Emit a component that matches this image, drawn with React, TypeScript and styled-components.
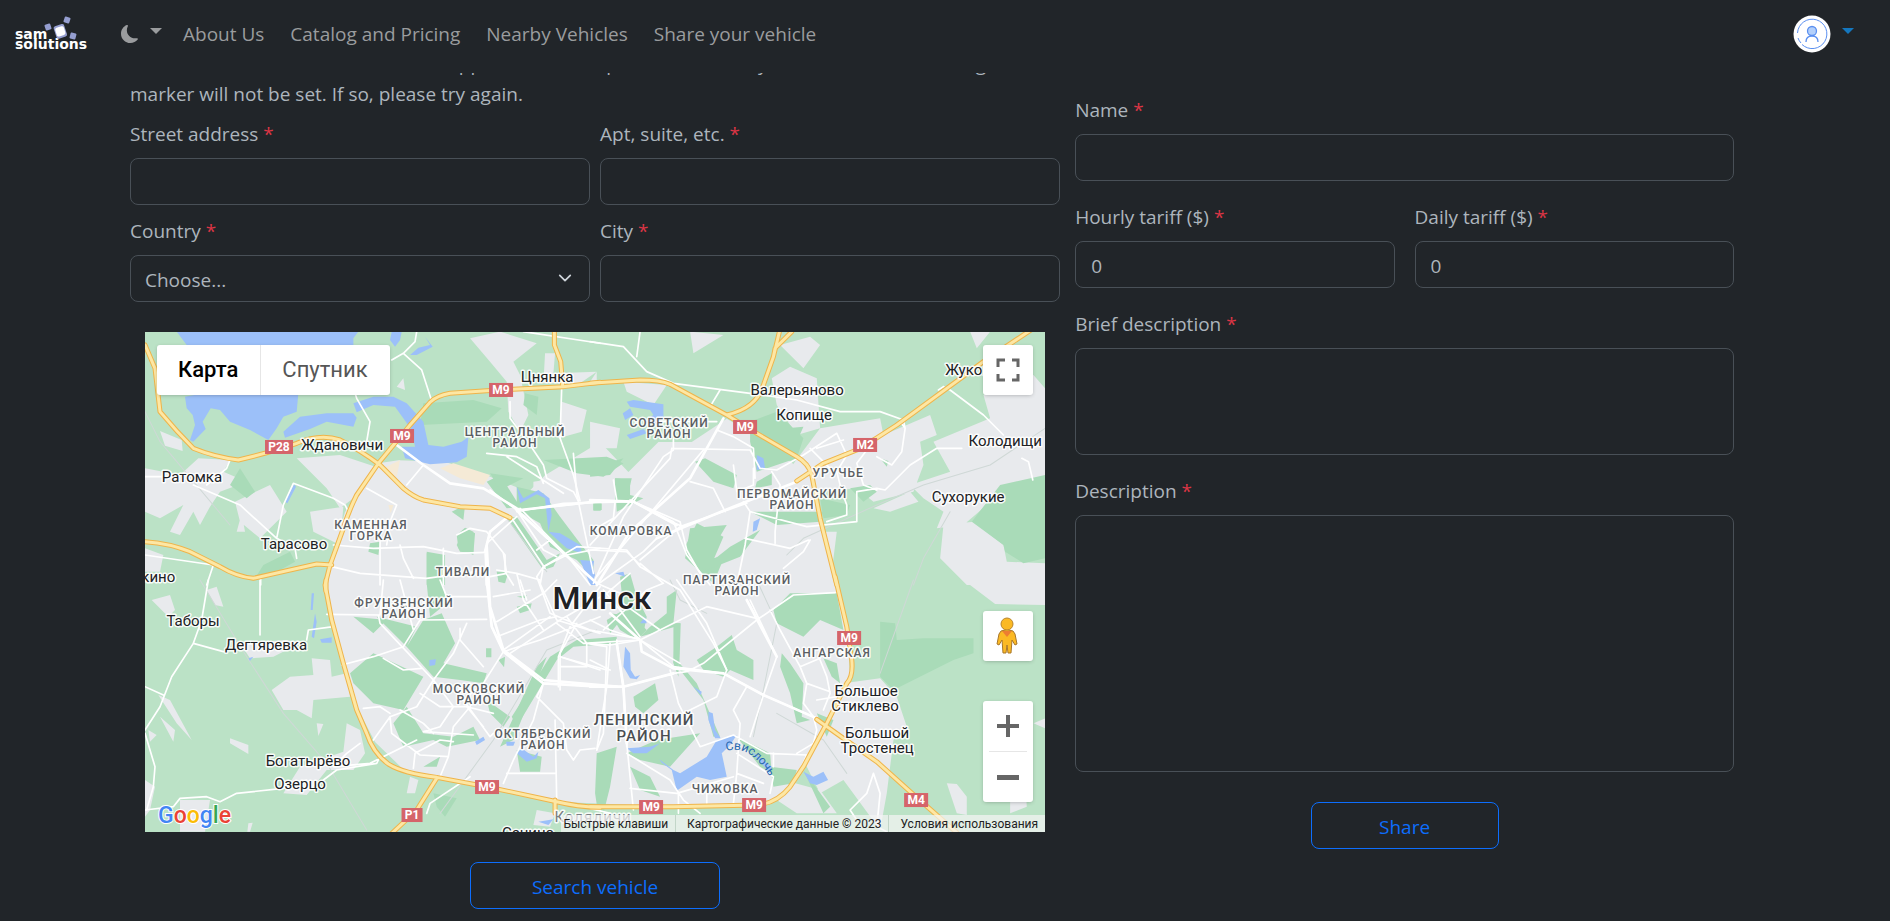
import React, { useId, useState } from "react";
import styled, { createGlobalStyle } from "styled-components";

const GlobalStyle = createGlobalStyle`
  *, *::before, *::after { box-sizing: border-box; }
  body {
    margin: 0;
    background: #212529;
    color: #adb5bd;
    font-family: "Open Sans", "Noto Sans", sans-serif;
    font-size: 19px;
    line-height: 30px;
  }
  button, input, select, textarea { font: inherit; color: inherit; }
`;

/* ---------- navigation ---------- */

const Navbar = styled.nav`
  display: flex;
  align-items: center;
  height: 73px;
  padding: 0 36px 6px 15px;
  background: #212529;
`;

const LogoLink = styled.a`
  display: block;
  width: 77px;
  height: 36px;
  margin-right: 29px;
`;

const MenuToggle = styled.button<{ $tone?: string }>`
  display: flex;
  align-items: center;
  gap: 11px;
  padding: 0;
  border: 0;
  background: none;
  color: ${(p) => p.$tone ?? "#9a9c9e"};
  cursor: pointer;
`;

const Caret = styled.span`
  margin-bottom: 6px;
  border: 6px solid transparent;
  border-top-color: currentColor;
  border-bottom: 0;
`;

const NavLinks = styled.div`
  display: flex;
  flex: 1;
  gap: 26px;
  margin-left: 21px;
`;

const NavLink = styled.a`
  color: #9a9c9e;
  text-decoration: none;
  white-space: nowrap;
`;

/* ---------- forms ---------- */

const Main = styled.main`
  display: grid;
  grid-template-columns: 24fr 17fr;
  gap: 15px;
  align-items: start;
  padding: 0 156px 12px 130px;
  overflow: hidden;
`;

const AddressForm = styled.form`
  display: flex;
  flex-direction: column;
  gap: 10px;
`;

const VehicleForm = styled.form`
  display: flex;
  flex-direction: column;
  gap: 20px;
  padding-top: 21px;
`;

const Hint = styled.p`
  margin: -24px 0 -1px;
`;

const FieldRow = styled.div<{ $gap: number }>`
  display: grid;
  grid-template-columns: 1fr 1fr;
  gap: ${(p) => p.$gap}px;
`;

const FieldBox = styled.div`
  display: flex;
  flex-direction: column;
  gap: 8px;
  min-width: 0;
  line-height: 32px;
`;

const Required = styled.span`
  color: #dc3545;
`;

const control = `
  display: block;
  width: 100%;
  padding: 8px 15px 6px;
  border: 1px solid #495057;
  border-radius: 8px;
  background: #212529;
  appearance: none;
  outline: none;
  line-height: 30px;
`;

const Input = styled.input`
  ${control}
  height: 47px;
  &::-webkit-inner-spin-button { appearance: none; }
`;

const Select = styled.select`
  ${control}
  height: 47px;
  padding-left: 14px;
`;

const TextArea = styled.textarea<{ $height: number }>`
  ${control}
  height: ${(p) => p.$height}px;
  resize: none;
`;

const SelectWrap = styled.div`
  position: relative;
`;

const SelectArrow = styled.svg`
  position: absolute;
  top: 16px;
  right: 18px;
  pointer-events: none;
`;

const OutlineButton = styled.button<{ $width: number; $space: number }>`
  align-self: center;
  width: ${(p) => p.$width}px;
  height: 47px;
  margin-top: ${(p) => p.$space}px;
  padding: 2px 0 0;
  border: 1px solid #0d6efd;
  border-radius: 8px;
  background: transparent;
  color: #0d6efd;
  cursor: pointer;
`;

/* ---------- map ---------- */

const MapFrame = styled.section`
  position: relative;
  height: 500px;
  margin: 20px 15px 0;
  overflow: hidden;
  background: #bbe2c6;
  font-family: Roboto, "Noto Sans", sans-serif;
`;

const MapCanvas = styled.svg`
  display: block;
  width: 100%;
  height: 100%;
  font-family: Roboto, "Noto Sans", sans-serif;
`;

const MapTypeBar = styled.div`
  position: absolute;
  top: 13px;
  left: 12px;
  display: flex;
  height: 50px;
  border-radius: 3px;
  background: #fff;
  box-shadow: 0 1px 4px -1px rgba(0, 0, 0, 0.3);
`;

const MapTypeButton = styled.button<{ $active?: boolean }>`
  padding: 0 22px 0 21px;
  border: 0;
  border-right: ${(p) => (p.$active ? "1px solid #e6e6e6" : "0")};
  background: none;
  color: ${(p) => (p.$active ? "#000" : "#565656")};
  font-size: 22px;
  font-weight: ${(p) => (p.$active ? 500 : 400)};
  cursor: pointer;
`;

const MapTools = styled.div`
  position: absolute;
  top: 13px;
  right: 12px;
  bottom: 30px;
  display: flex;
  flex-direction: column;
  width: 50px;
`;

const ToolCard = styled.div<{ $push?: boolean; $gap?: number }>`
  margin-top: ${(p) => (p.$push ? "auto" : `${p.$gap ?? 0}px`)};
  border-radius: 3px;
  background: #fff;
  box-shadow: 0 1px 4px -1px rgba(0, 0, 0, 0.3);
`;

const ToolButton = styled.button`
  display: block;
  width: 50px;
  height: 50px;
  padding: 0;
  border: 0;
  background: none;
  cursor: pointer;
`;

const ToolDivider = styled.hr`
  height: 1px;
  margin: 0 6px;
  border: 0;
  background: #e6e6e6;
`;

const Attribution = styled.div`
  position: absolute;
  right: 0;
  bottom: 0;
  display: flex;
  height: 17px;
  font-size: 12px;
  line-height: 18px;
  color: #222;
`;

const AttributionItem = styled.a`
  padding: 0 7px 0 11px;
  border-left: 1px solid rgba(160, 190, 170, 0.5);
  background: rgba(245, 245, 245, 0.7);
  color: inherit;
  text-decoration: none;
  white-space: nowrap;

  &:first-child {
    padding-left: 2px;
    border-left: 0;
  }
`;

/* Geometry is stored in map sheets; each sheet has its own origin. */
type Sheet = "nw" | "ne" | "sw" | "se" | "mid";
const sheetOrigin: Record<Sheet, string> = {
  nw: "-15 -21",
  ne: "1335 -21",
  sw: "-15 744",
  se: "1335 744",
  mid: "555 354",
};
type Layer = Partial<Record<Sheet, string>>;

const URBAN =
  "M1365 330L1200 430L1150 480L1000 420L900 390L760 385L700 394L600 540L555 699L543 774L560 864L595 994L640 1134L690 1230L785 1322L1025 1364L1235 1409L1585 1424L1865 1412L1925 1374L2045 1174L2115 1034L2105 884L2040 620L1995 440L1880 340L1745 260L1640 330L1540 330L1450 420Z";

const suburbs: Layer = {
  nw: `M60 318L125 345L128 378L75 362Z M175 400L270 405L250 440L320 470L240 500L210 545L180 600L160 560L120 630L90 620L130 540L60 580L15 560V430L120 450Z
    M285 530L390 480L440 560L360 640L300 590Z M470 400L600 390L720 430L640 520L600 550L560 490Z M510 560L610 545L600 660L520 620Z M770 185L790 160L795 195Z
    M990 40L1080 20L1190 55L1120 110L1140 150L1165 270L1140 320L1105 260L1100 170L1050 110Z M1215 85H1245L1240 145L1370 140L1320 175H1210Z M1265 230L1340 255L1325 320L1255 340Z M15 670L70 690L60 740H15Z
    M1180 470L1380 440V780H1180Z M290 620L305 565L315 620Z M660 430L720 440L700 520L650 540Z`,
  ne: `M300 20L400 30L310 85Z M570 60L660 35L690 60L640 130Z M545 160L600 125L680 160L690 310L620 330L560 240Z M690 310L870 280L880 330L1020 270L1040 330L990 350L1000 420L970 500L850 530L800 490L690 500L600 430Z
    M1030 350L1200 280L1180 210L1330 150L1365 190V490L1290 470L1230 490L1190 540L1120 600L1040 610L1060 560L1000 520L960 480L1080 440Z M1060 600L1150 590L1240 660L1250 710L1365 715V780H1130L1050 700Z
    M850 550L960 500L985 530L900 560Z M1140 20H1200L1160 70Z M100 170L230 180L190 240L110 200Z M0 290L90 310L80 370L0 370Z M20 140V170H0Z M590 620L740 620L720 780H590Z`,
  sw: `M35 60L90 45L105 90L85 110Z M200 30L230 20L250 80L225 75Z M395 330L450 290L520 285L515 235L570 240L575 290L620 280L630 350L520 360L515 415L470 390L430 390Z M55 345L90 360L155 480L110 430Z M60 410L105 450L100 485Z
    M270 475L325 495V522L270 490Z M530 430L550 432L535 468Z M620 430L660 450L675 520L640 570L560 570L500 645L430 640L480 560L610 515Z M300 190L440 180L480 190L400 230L330 235Z M15 600L45 620L30 690L15 710Z M120 660H210L195 755H120Z M810 590L835 600L825 640L800 640Z M1190 690L1245 700L1230 740L1180 735Z M325 730L338 728L330 755H322Z M25 450L50 465L30 485Z`,
  se: `M1120 0H1365V75L1215 72Z M760 310L870 295L920 350L950 440L910 480L890 640L870 750L760 600L690 640L640 540L710 430Z M580 600L690 630L740 700H620L560 660Z M1070 610L1100 612L1130 650V705L1100 700Z M1260 655L1305 600L1310 680L1260 700Z M1330 430L1365 415V445Z`,
};

const parks: Layer = {
  nw: `M345 760L370 720L450 680L465 710L420 735Z M850 235L1000 225L1085 250L1040 290L840 300Z M935 560L975 540L970 585Z M950 630L975 608L1000 620L1000 690L955 670Z M860 680L915 690V780H860Z M270 480L300 430L345 500L320 520Z M690 655L720 650L715 690L685 680Z M1040 470L1080 450L1140 545L1100 550Z M1155 205L1195 215L1190 270L1150 240Z M1070 740L1105 740L1095 775L1075 770Z`,
  ne: `M480 290L560 260L600 300L640 340L620 400L560 420L500 440L480 350Z M315 410L345 400L440 450L430 490L370 470Z M75 460L120 465L120 510L160 520L80 560Z M10 535H35V555H10Z M300 610L410 600L380 650L370 700L405 690L370 775L285 700Z M500 560L700 560L690 590L560 600L480 560Z M690 520L780 540L770 570L700 580Z M780 490L840 480L860 500L820 530Z M1145 590L1230 480L1365 450V700L1300 715L1245 680L1240 660Z M0 430L100 400L60 450L0 455Z M590 310L640 305L620 350Z M870 400L895 408L890 425Z M500 470L545 445V480L495 490Z`,
  sw: `M640 110L740 120L700 160Z M710 110L830 140L800 200L740 140Z M630 280L700 220L850 290L790 390L700 370L640 310Z M850 120L905 100L945 190L910 250L1040 280L1030 310L960 300L880 290L800 200Z M1038 205H1054V232H1038Z M1075 240L1095 230L1092 262Z M800 380L760 430L790 500L880 480L920 500L1020 480L1000 440L940 470L850 460Z M1040 360L1110 410L1090 440L1050 400Z M1130 510L1205 530L1200 575H1140Z M880 640L950 655L915 710L890 680Z M850 560L900 530L890 560Z M1130 80L1175 70L1170 90L1140 100Z M1130 50L1160 45L1155 55Z M1190 260L1220 230L1120 480L1080 500Z`,
  se: `M870 125L915 130L920 180L1000 175L1150 175V220L1090 240L910 330L870 290Z M550 90L600 40H740L760 150L690 120L640 170L560 130Z M320 240L380 200L425 165L440 210L490 240V300L420 270L400 290L340 270Z M250 130H272L268 250H250Z M130 350L195 310L205 360L160 400L135 380Z M575 220L600 250L640 310L635 410L660 420L620 430L600 340L570 260Z M700 235L740 250L750 310L725 290Z M20 520L80 500L60 620L30 740L15 640Z M110 520L200 480L330 460L240 560L150 540Z M540 560L620 570L610 610L550 620Z M260 240L320 310L390 470L370 470L340 360L270 270Z M120 560L180 590L210 650L150 630Z M640 570L720 680L700 700Z M60 100L130 110L170 150L140 180L90 150Z M440 470L540 520L545 580L510 560Z M680 400L730 420L710 470Z`,
  mid: `M380 285L405 235L435 250L430 310L390 305Z M290 310L340 315L335 390L350 460L300 500L290 400Z M500 365L535 370L520 400Z M560 110L640 130L690 200L750 280L790 330L790 380L740 330L660 290L630 220L560 180Z M530 205L560 200L650 330L690 310L670 350L640 360Z M1010 440L1040 420L1030 520L1050 520L1045 680L1030 640L1035 530L930 560L960 530L1010 490Z M870 380L900 370L920 440L950 500L940 550L880 500L840 550L830 510L880 480Z M1095 350L1065 290L1100 220L1180 260L1150 330L1200 290L1290 240L1230 320L1130 360Z M545 800L660 620L740 570L860 560V580L730 590L680 630L560 830Z M855 85L905 85L890 150L855 160Z M790 158H812V182H790Z M640 30L830 20L880 40L820 80L740 70Z M480 70L580 85L510 120Z`,
};

const water: Layer = {
  nw: `M110 20H640V60H140Z M640 20H655L640 40Z M755 20H785L780 45L765 65L750 45Z M135 215L190 205H475L470 260L430 275L410 310L385 345L330 315L270 290L240 255L212 250L188 290L197 312L160 350L150 345L165 300L158 270L140 250Z M430 320L480 275L560 265L640 265L650 278L640 305L560 290L510 312L435 338Z
    M640 235L700 215L760 215L800 235L850 290L865 360L910 365L965 350L985 335L980 395L950 412L870 418L795 400L785 365L825 365L815 315L765 245L700 240L650 262Z M435 530L462 478L468 485L442 535Z M1130 485L1150 520L1195 495L1228 520L1235 570L1225 620L1260 625L1320 660L1325 685L1280 670L1225 620L1215 520L1190 508L1140 535Z M1320 705L1362 708L1355 750L1375 780H1350Z M810 90L835 68L870 60L855 35L878 65L830 90Z`,
  ne: `M110 230L130 225L220 238V275L205 300L160 290L190 270L180 255L120 245Z M98 265L120 250L130 270L105 285Z M110 330L160 312L170 325L120 342Z M500 390L520 400L525 430L500 435Z M490 590L510 580L500 615L488 620Z M75 745L100 740L105 755Z M0 700L15 750L10 765L0 750Z`,
  sw: `M540 178L575 172V188H545Z M515 40H522L518 90H512Z M525 100L530 125L522 175L515 170Z M868 240L888 238L885 255L868 258Z M325 235L340 230L328 245Z M1130 520L1145 505L1180 530L1195 515L1190 535L1160 545Z M1005 485L1030 470L1035 480L1010 495Z M1195 725L1240 718L1225 735Z M1098 485H1125L1120 497H1100Z`,
  se: `M105 200L120 220L122 270L135 290L150 285L140 298L120 295L100 260Z M355 395L368 400L375 450L392 475L375 475L355 420Z M208 538L250 570L270 580L350 530L380 480L440 465L420 495L395 520L410 590L360 600L320 590L260 632L245 570L215 548Z M640 575L670 590L700 575L714 600L680 615L660 610Z M110 505L180 500L210 490L170 520L130 520Z M310 320L335 335L332 345Z M440 480L545 560L540 580L480 510Z M150 130L165 110L170 130Z`,
};

const sand: Layer = {
  nw: `M730 430L780 405L770 455Z M900 430L940 415L1050 450L1030 480L960 460Z M745 540L760 540L752 565Z`,
};

const minorRoads: Layer = {
  nw: `M830 20L825 50L790 85L755 105 M790 85L845 135L875 228 M640 190L650 220L690 290L680 350L640 370 M1380 55L1150 20 M160 480L300 540L410 640L420 590L430 540L460 475L580 520L615 540L625 560 M410 640L465 670L470 700 M15 455H80 M15 690L220 720L200 780 M270 405L260 430L200 480 M680 490L770 540L750 590L740 660 M580 660L700 670L850 665L950 685L1040 682
    M1110 230L1110 280L1170 360L1210 420L1220 460L1300 500L1315 528 M1265 185L1260 340L1300 450L1320 528 M1140 555L1380 530 M1100 578L1050 620L1035 680L1040 780 M1140 550L1280 690L1380 670 M1280 690L1210 725L1200 780 M950 630L990 610L1040 620L1095 690V740L1120 780 M780 660L790 700L820 760 M720 600V780 M575 725L660 745L860 760L1040 735 M850 420L800 480 M910 670V780 M362 760V780 M1115 580L1215 730 M1280 690L1350 780`,
  ne: `M0 50L100 65L170 140L250 175L480 205 M150 20L140 95 M390 195L360 245 M480 205L620 225L750 260H870L940 285L945 310L935 380L905 420L860 395 M800 415L830 375 M945 310L930 290 M245 370L480 375L510 430 M380 315L430 335L490 370L495 460 M245 370L240 400L0 660 M300 470L370 490L405 560 M0 525L130 530L250 590L290 690L360 780 M430 420L440 500L490 480V430 M510 430L560 435L640 390L740 325L770 390L740 440L755 500L770 540V570L710 590
    M660 370L720 430 M680 370L760 345 M480 560L650 605L800 590V500L860 490L885 495L960 420L1040 370H1115 M460 530L480 560L465 660L440 780 M465 640L600 670L655 645 M580 730L640 680L660 645 M545 440L570 480L555 620V655 M800 415L820 480L860 495 M1060 185L1080 195L1180 270L1240 330 M1295 400L1315 410L1328 465 M1060 185L1045 195 M20 780L160 680L200 640L250 620 M0 675L110 680L150 720 M75 530L70 580L0 620 M250 340V370 M200 290L380 290`,
  sw: `M205 0L185 120L160 190L95 290L60 380L15 450 M15 320L70 345 M360 0V165 M160 190L250 215 M500 180L505 150L580 140 M560 103L720 105L730 0 M715 105L720 130L880 300L940 380 M605 255L700 230L790 200L840 120L1040 118 M780 0L820 150 M730 235L790 270L845 265 M700 480L750 410L830 380L880 300L940 220L980 130 M750 410L755 460L840 525L925 530 M670 385L720 380L750 400 M840 340L900 380L980 380L1060 400 M780 390L850 430L880 460 M820 565L825 520L900 480L940 485 M940 380L900 440L850 455L1000 465 M1090 215L1030 310L990 380L940 440L925 530L900 590 M1030 310L970 360L1050 470L1060 460
    M960 145V180L1030 260 M1040 0L1055 140L1090 215L1210 310L1380 320 M1090 215L1200 180L1380 110 M1210 310L1190 350L1270 430L1280 510L1300 540L1320 510L1365 505 M1210 310L1180 420L1120 540L1090 610 M1255 320V230L1290 140L1380 20 M1260 230L1380 270 M1100 580H1245 M1245 420L1250 660 M990 590L870 670L860 700 M900 0L920 50H1040 M1250 120L1380 160 M980 380L1030 440 M660 490L620 520L580 560L690 550L790 500L830 480
    M550 600L590 570L710 550L720 530 M15 690L100 680L120 655L200 650L240 665L290 640L430 625L500 600 M15 460L45 560L40 620L20 690 M1140 0L1160 60 M1195 0L1250 120 M1250 660L1380 690 M1070 170L1200 120L1250 110`,
  se: `M0 190L60 195L150 180L310 100L350 80L500 115L470 60 M0 320L100 320L250 280L290 275L340 250L500 120L610 45L735 38 M150 180L250 260L400 280L520 345L680 415 M80 190L100 320L110 490L120 590L130 690 M60 190L50 320L20 510 M240 270L265 370L330 500L430 465 M410 270L380 350L280 400 M480 60L560 230L520 345L480 470 M350 130L410 270 M470 320L430 390L450 430L440 580L430 670
    M540 90L570 150L630 260L650 310L640 370L670 410L680 450L670 490L620 520 M700 390L720 340L710 290L690 240 M650 310L720 335 M630 260L690 235 M430 465L530 520L650 525L630 570 M440 520L550 590L540 640 M430 590L260 640L120 625 M265 640V700 M110 520L240 600L280 660L330 700 M520 610L440 580 M850 580L830 640L780 690L800 720 M850 580L870 640L860 740L890 755 M260 0L350 130 M0 120L60 150L150 180 M0 240L60 270 M350 640V670 M550 520V560 M680 360L740 350 M0 685L60 700`,
  mid: `M470 10L560 20L620 50L640 100 M480 120L560 180L640 300L680 320 M560 180L700 310L800 400L870 430 M560 185L700 160L910 155L1050 215L1070 300L1110 370 M640 350L740 290L890 300L930 350L1050 420L1150 580L1190 660 M640 350L620 380L660 490L780 540L920 565 M500 360L560 370L630 390 M500 515L640 430L680 390 M540 610L690 510L830 430L900 370 M490 440L600 420 M520 600L660 500 M710 500L770 580L830 590L825 750L820 850L800 900 M770 580V650H690 M740 520L690 610V720
    M790 400L880 200L1000 20L1030 0 M800 380L1120 0 M930 330L1050 230L1250 160 M900 150L1010 210L1060 230 M680 520L760 580L930 570L1050 640 M820 420L870 480L930 560 M850 440L990 540 M820 540L950 420L1000 400L930 340 M530 20L700 130 M560 370L580 450L640 540 M470 280L560 200 M620 300L660 270 M520 310L530 370L480 380 M730 10L740 130L790 370 M860 570L880 720L890 890 M690 620L830 660 M850 90L860 150`,
};

const arterials: Layer = {
  nw: `M770 360L850 420L930 475L1030 490L1130 550L1140 555L1380 528 M1040 680L1040 780 M1100 578L1050 620L1035 680`,
  ne: `M400 280L300 460L120 620L20 780 M200 640L430 545L620 470 M0 525L130 530L260 600`,
  sw: `M1040 0L1055 140L1090 215L1210 310L1380 320`,
  se: `M60 100L150 180L155 215L250 265L400 280L520 345L680 415 M80 190L100 320L110 490 M470 60L560 230 M0 320L100 320L250 280`,
  mid: `M470 290L480 470L520 600L640 690L860 710 M560 180L800 400`,
};

const railways: Layer = {
  nw: `M15 260L60 350L270 600 M1100 580L1220 740`,
  ne: `M1365 310L1200 420L1000 480L860 540L640 640L590 690 M1080 560L1000 700L970 780`,
  sw: `M180 0L320 230L430 400L560 550L680 750 M1370 150L1220 210L1060 480L900 700`,
  se: `M970 0L870 280 M500 0L560 130L520 330L490 470 M560 400L700 480L770 580 M240 0L270 60L350 100`,
};

const motorways: Layer = {
  nw: `M1380 172L1270 185L1040 197L930 205Q890 212 870 232L810 300L715 415L650 510Q625 560 610 610L570 720L555 780L558 800
    M15 60L45 130L60 260Q110 320 160 370Q220 395 295 405Q400 380 470 355Q540 325 600 345Q660 375 720 420L790 490Q820 515 850 525L960 545L1050 550L1110 578
    M15 650Q90 655 150 680L240 725Q290 755 340 760L450 735L530 717L575 720 M1243 20V60L1262 110L1268 185`,
  ne: `M740 780L690 580L665 450Q655 415 620 395L500 325L410 270L240 178Q210 165 150 165L0 175 M568 20L550 95L520 180Q500 250 410 270 M605 20L555 70L550 95 M1330 10L1180 110L920 300Q860 340 800 375L700 415L620 468`,
  sw: `M558 0L558 30L575 120L610 250L650 390L680 460Q700 520 745 552Q790 580 890 592L1040 620L1250 665Q1310 680 1380 682 M750 765L830 690L890 595 M1245 660V700`,
  se: `M0 680H250L500 675Q560 670 600 620L640 560L710 430L770 310Q790 290 785 240L770 140L735 -10 M680 418L760 475L860 545L960 635L1100 758`,
};

const LayerPaths = ({ layer, ...rest }: { layer: Layer } & React.SVGProps<SVGPathElement>) => (
  <>
    {(Object.keys(layer) as Sheet[]).map((s) => (
      <path key={s} d={layer[s]} transform={`translate(${sheetOrigin[s]})`} {...rest} />
    ))}
  </>
);

type Place = [string, number, number];

const towns: Place[] = [
  ["Цнянка", 402, 50], ["Ждановичи", 197, 118], ["Ратомка", 47, 150], ["Тарасово", 149, 217],
  ["Дубкино", 0, 250], ["Таборы", 48, 294], ["Дегтяревка", 121, 318], ["Богатырёво", 163, 434],
  ["Озерцо", 155, 457], ["Валерьяново", 652, 63], ["Копище", 659, 88], ["Жуковка", 831, 43],
  ["Колодищи", 860, 114], ["Сухорукие", 823, 170], ["Большое", 721, 364], ["Стиклево", 720, 379],
  ["Большой", 732, 406], ["Тростенец", 732, 421], ["Сенино", 383, 506],
];

const districts: Place[] = [
  ["ЦЕНТРАЛЬНЫЙ", 370, 104], ["РАЙОН", 370, 115], ["СОВЕТСКИЙ", 524, 95], ["РАЙОН", 524, 106],
  ["УРУЧЬЕ", 693, 145], ["ПЕРВОМАЙСКИЙ", 647, 166], ["РАЙОН", 647, 177], ["КАМЕННАЯ", 226, 197],
  ["ГОРКА", 226, 208], ["КОМАРОВКА", 486, 203], ["ТИВАЛИ", 318, 244], ["ПАРТИЗАНСКИЙ", 592, 252],
  ["РАЙОН", 592, 263], ["ФРУНЗЕНСКИЙ", 259, 275], ["РАЙОН", 259, 286], ["АНГАРСКАЯ", 687, 325],
  ["МОСКОВСКИЙ", 334, 361], ["РАЙОН", 334, 372], ["ОКТЯБРЬСКИЙ", 398, 406], ["РАЙОН", 398, 417],
  ["ЧИЖОВКА", 580, 461],
];

const shields: Place[] = [
  ["M9", 356, 58], ["P28", 134, 115], ["M9", 257, 104], ["M9", 600, 95], ["M2", 720, 113],
  ["M9", 704, 306], ["M9", 506, 475], ["M9", 609, 473], ["M4", 771, 468], ["M9", 342, 455], ["P1", 267, 483],
];

const MapLabel = styled.text<{ $kind: "town" | "district" | "suburb" | "region" | "city" | "river" }>`
  text-anchor: middle;
  paint-order: stroke;
  stroke: rgba(255, 255, 255, 0.9);
  stroke-width: 3px;
  stroke-linejoin: round;
  ${({ $kind }) =>
    ({
      town: "font-size: 15px; fill: #202124;",
      district: "font-size: 12px; font-weight: 500; letter-spacing: 1px; fill: #5a5e63;",
      suburb: "font-size: 15px; letter-spacing: 1px; fill: #7a7e83;",
      region: "font-size: 15px; font-weight: 500; letter-spacing: 1px; fill: #4a4e52;",
      city: "font-size: 32px; font-weight: 500; fill: #202124;",
      river: "font-size: 12px; fill: #2767b0; stroke: none; text-anchor: start;",
    })[$kind]}
`;

const ShieldText = styled.text`
  font-size: 12px;
  font-weight: 700;
  fill: #fff;
  text-anchor: middle;
`;

const GoogleWord = styled.text`
  font-size: 23px;
  font-weight: 500;
  paint-order: stroke;
  stroke: #fff;
  stroke-width: 2px;
`;

const CityMap = () => (
  <MapCanvas viewBox="0 0 900 500" preserveAspectRatio="xMidYMid slice" role="img" aria-label="Минск">
    <rect width="900" height="500" fill="#bbe2c6" />
    <g transform="scale(0.333333)" strokeLinejoin="round" strokeLinecap="round">
      <path d={URBAN} fill="#e8eaed" />
      <LayerPaths layer={suburbs} fill="#e8eaed" />
      <LayerPaths layer={parks} fill="#a9dbb8" />
      <LayerPaths layer={sand} fill="#f5ead6" />
      <LayerPaths layer={water} fill="#9cc0f9" />
      <LayerPaths layer={railways} fill="none" stroke="#cfd8d6" strokeWidth="3" />
      <LayerPaths layer={minorRoads} fill="none" stroke="#fff" strokeWidth="5" />
      <LayerPaths layer={arterials} fill="none" stroke="#fff" strokeWidth="8" />
      <LayerPaths layer={motorways} fill="none" stroke="#efb44a" strokeWidth="15" />
      <LayerPaths layer={motorways} fill="none" stroke="#fde7a4" strokeWidth="9" />
    </g>
    {towns.map(([name, x, y]) => (
      <MapLabel $kind="town" key={name} x={x} y={y}>{name}</MapLabel>
    ))}
    {districts.map(([name, x, y]) => (
      <MapLabel $kind="district" key={name + y} x={x} y={y}>{name}</MapLabel>
    ))}
    <MapLabel $kind="suburb" x={448} y={490}>Колядичи</MapLabel>
    <MapLabel $kind="region" x={499} y={393}>ЛЕНИНСКИЙ</MapLabel>
    <MapLabel $kind="region" x={499} y={409}>РАЙОН</MapLabel>
    <MapLabel $kind="city" x={457} y={277}>Минск</MapLabel>
    <path id="river-line" d="M581 419Q596 415 607 424T626 447" fill="none" />
    <MapLabel $kind="river"><textPath href="#river-line">Свислочь</textPath></MapLabel>
    {shields.map(([name, x, y]) => {
      const w = name.length > 2 ? 28 : name === "P1" ? 21 : 24;
      return (
        <g key={name + x}>
          <rect x={x - w / 2} y={y - 7} width={w} height="14" fill="#d5646a" />
          <ShieldText x={x} y={y + 4}>{name}</ShieldText>
        </g>
      );
    })}
    <GoogleWord x="13" y="491">
      <tspan fill="#4285f4">G</tspan><tspan fill="#ea4335">o</tspan><tspan fill="#fbbc04">o</tspan><tspan fill="#4285f4">g</tspan><tspan fill="#34a853">l</tspan><tspan fill="#ea4335">e</tspan>
    </GoogleWord>
  </MapCanvas>
);

const Pegman = () => (
  <svg width="50" height="50" viewBox="0 0 50 50" aria-hidden="true">
    <path d="M18 20q6-3 12 0l2 3 2 10-2 1-3-5-1 13h-3l-1-8-1 8h-3l-1-13-3 5-2-1 2-10z" fill="#fbb924" stroke="#a8772a" strokeWidth="1" />
    <path d="M19 20l5 6 5-6z" fill="#ed7d31" />
    <circle cx="24" cy="13" r="6" fill="#fbb924" stroke="#b9852d" strokeWidth="1" />
  </svg>
);

const Logo = () => (
  <svg width="77" height="36" viewBox="15 10 77 36" role="img" aria-label="sam solutions">
    <g fontFamily="DejaVu Sans" fontWeight="700" fontSize="14" fill="#fff">
      <text x="15" y="33">sam</text>
      <text x="15" y="43">solutions</text>
    </g>
    <g fill="#959ed0">
      <rect x="64" y="11" width="6" height="6" rx="1" transform="rotate(18 67 14)" />
      <rect x="45" y="18" width="6" height="6" rx="1" transform="rotate(-18 48 21)" />
      <rect x="70" y="27" width="6" height="6" rx="1" transform="rotate(15 73 30)" />
      <rect x="55" y="19" width="11" height="13" rx="2" transform="rotate(-18 60 26)" />
    </g>
    <rect x="56" y="21" width="9" height="9" rx="2" fill="#fff" transform="rotate(-18 60 26)" />
  </svg>
);

const Moon = () => (
  <svg width="18" height="18" viewBox="0 0 16 16" fill="currentColor" aria-hidden="true">
    <path d="M6 .278a.768.768 0 0 1 .08.858 7.208 7.208 0 0 0-.878 3.46c0 4.021 3.278 7.277 7.318 7.277.527 0 1.04-.055 1.533-.16a.787.787 0 0 1 .81.316.733.733 0 0 1-.031.893A8.349 8.349 0 0 1 8.344 16C3.734 16 0 12.286 0 7.71 0 4.266 2.114 1.312 5.124.06A.752.752 0 0 1 6 .278z" />
  </svg>
);

const Avatar = () => (
  <svg width="38" height="38" viewBox="0 0 38 38" aria-hidden="true">
    <circle cx="19" cy="19" r="18.5" fill="#fff" />
    <g fill="none" stroke="#5a8ff0" strokeWidth="1">
      <path d="M4.500 18A14.700 14.700 0 1 1 9 29.500M8 28A14.700 14.700 0 0 1 5 23" />
      <path d="M13 27c0-4 2-6 6-6s6 2 6 6" strokeWidth="1.300" />
      <circle cx="19" cy="16" r="4.500" fill="#b3d0fb" strokeWidth="1.300" />
    </g>
  </svg>
);

type FieldProps = { label: string; children: (id: string) => React.ReactNode };

const Field = ({ label, children }: FieldProps) => {
  const id = useId();
  return (
    <FieldBox>
      <label htmlFor={id}>
        {label} <Required>*</Required>
      </label>
      {children(id)}
    </FieldBox>
  );
};

export default function App() {
  const [hourly, setHourly] = useState("0");
  const [daily, setDaily] = useState("0");

  return (
    <>
      <GlobalStyle />
      <Navbar>
        <LogoLink href="#"><Logo /></LogoLink>
        <MenuToggle type="button" aria-label="Theme"><Moon /><Caret /></MenuToggle>
        <NavLinks>
          <NavLink href="#about">About Us</NavLink>
          <NavLink href="#catalog">Catalog and Pricing</NavLink>
          <NavLink href="#nearby">Nearby Vehicles</NavLink>
          <NavLink href="#share">Share your vehicle</NavLink>
        </NavLinks>
        <MenuToggle type="button" aria-label="Account" $tone="#1477be"><Avatar /><Caret /></MenuToggle>
      </Navbar>

      <Main>
        <AddressForm onSubmit={(e) => e.preventDefault()}>
          <Hint>
            If an error has occurred, it does not appear on the map or it is outside, your vehicle and its listing
            <br />
            marker will not be set. If so, please try again.
          </Hint>
          <FieldRow $gap={10}>
            <Field label="Street address">{(id) => <Input id={id} type="text" />}</Field>
            <Field label="Apt, suite, etc.">{(id) => <Input id={id} type="text" />}</Field>
            <Field label="Country">
              {(id) => (
                <SelectWrap>
                  <Select id={id} defaultValue="">
                    <option value="">Choose...</option>
                  </Select>
                  <SelectArrow width="14" height="14" viewBox="0 0 16 16" fill="none" stroke="#ced4da" strokeWidth="2" strokeLinecap="round" strokeLinejoin="round">
                    <path d="m2 5 6 6 6-6" />
                  </SelectArrow>
                </SelectWrap>
              )}
            </Field>
            <Field label="City">{(id) => <Input id={id} type="text" />}</Field>
          </FieldRow>

          <MapFrame>
            <CityMap />
            <MapTypeBar>
              <MapTypeButton type="button" $active>Карта</MapTypeButton>
              <MapTypeButton type="button">Спутник</MapTypeButton>
            </MapTypeBar>
            <MapTools>
              <ToolCard>
                <ToolButton type="button" aria-label="Fullscreen">
                  <svg width="50" height="50" viewBox="0 0 50 50" fill="none" stroke="#666" strokeWidth="3" aria-hidden="true">
                    <path d="M15 22V15H22M29 15H35V22M35 29V35H29M22 35H15V29" />
                  </svg>
                </ToolButton>
              </ToolCard>
              <ToolCard $push>
                <ToolButton type="button" aria-label="Street View"><Pegman /></ToolButton>
              </ToolCard>
              <ToolCard $gap={40}>
                <ToolButton type="button" aria-label="Zoom in">
                  <svg width="50" height="50" viewBox="0 0 50 50" fill="#666" aria-hidden="true">
                    <path d="M23 14h4v9h9v4h-9v9h-4v-9h-9v-4h9z" />
                  </svg>
                </ToolButton>
                <ToolDivider />
                <ToolButton type="button" aria-label="Zoom out">
                  <svg width="50" height="50" viewBox="0 0 50 50" fill="#666" aria-hidden="true">
                    <path d="M14 23h22v5H14z" />
                  </svg>
                </ToolButton>
              </ToolCard>
            </MapTools>
            <Attribution>
              <AttributionItem href="#keys">Быстрые клавиши</AttributionItem>
              <AttributionItem href="#data">Картографические данные © 2023</AttributionItem>
              <AttributionItem href="#terms">Условия использования</AttributionItem>
            </Attribution>
          </MapFrame>
          <OutlineButton $width={250} $space={20}>Search vehicle</OutlineButton>
        </AddressForm>

        <VehicleForm onSubmit={(e) => e.preventDefault()}>
          <Field label="Name">{(id) => <Input id={id} type="text" />}</Field>
          <FieldRow $gap={20}>
            <Field label="Hourly tariff ($)">
              {(id) => <Input id={id} type="number" value={hourly} onChange={(e) => setHourly(e.target.value)} />}
            </Field>
            <Field label="Daily tariff ($)">
              {(id) => <Input id={id} type="number" value={daily} onChange={(e) => setDaily(e.target.value)} />}
            </Field>
          </FieldRow>
          <Field label="Brief description">{(id) => <TextArea id={id} $height={107} />}</Field>
          <Field label="Description">{(id) => <TextArea id={id} $height={257} />}</Field>
          <OutlineButton $width={188} $space={10}>Share</OutlineButton>
        </VehicleForm>
      </Main>
    </>
  );
}
